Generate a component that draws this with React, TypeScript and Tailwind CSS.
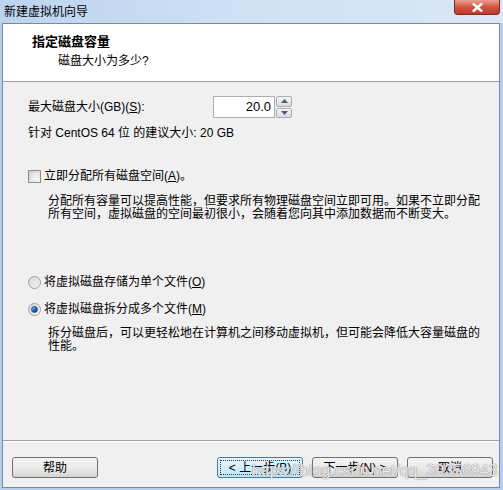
const font = "font-['Liberation_Sans','Noto_Sans_CJK_SC',sans-serif]";

function WinButton({ label, focused }: { label: string; focused?: boolean }) {
    if (focused) {
        return (
            <div className="w-[86px] h-[21px] rounded-[3px] border border-[#3c7fb1] bg-gradient-to-b from-[#eaf6fd] to-[#bee6fd] p-[2px]">
                <div className="h-full border border-dotted border-[#333] flex items-center justify-center text-[12px] text-black leading-none">
                    {label}
                </div>
            </div>
        );
    }
    return (
        <div className="w-[86px] h-[21px] rounded-[3px] border border-[#707070] bg-gradient-to-b from-[#f3f3f3] via-[#ebebeb] to-[#d6d6d6] flex items-center justify-center text-[12px] text-black leading-none">
            {label}
        </div>
    );
}

function Radio({ checked }: { checked?: boolean }) {
    return (
        <div className="w-[13px] h-[13px] rounded-full border border-[#a0a0a0] bg-gradient-to-br from-[#d4d4d4] to-[#f8f8f8] flex items-center justify-center shrink-0">
            {checked && (
                <div className="w-[7px] h-[7px] rounded-full bg-gradient-to-br from-[#8cc8f5] via-[#1f6fc4] to-[#0d3f85] border border-[#1c4f8c]" />
            )}
        </div>
    );
}

export default function App() {
    return (
        <div className={`relative w-[503px] h-[490px] bg-[#b4cfec] overflow-hidden ${font}`}>
            {/* title bar */}
            <div className="h-[23px] flex items-start justify-between bg-gradient-to-r from-[#bcd4ee] via-[#cfe1f4] to-[#dae8f6]">
                <div className="pl-[4px] pt-[5px] text-[12px] leading-[14px] text-black">新建虚拟机向导</div>
                <div className="mr-[3px] w-[46px] h-[15px] rounded-b-[4px] border border-t-0 border-[#7a2a1f] bg-gradient-to-b from-[#e8a092] via-[#d0553f] to-[#c0392a] flex items-center justify-center">
                    <svg width="11" height="9" viewBox="0 0 11 9">
                        <path d="M1 0.5 L10 8.5 M10 0.5 L1 8.5" stroke="#ffffff" strokeWidth="2.4" />
                        <path d="M1 0.5 L10 8.5 M10 0.5 L1 8.5" stroke="#ffffff" strokeWidth="1.6" />
                    </svg>
                </div>
            </div>

            {/* client */}
            <div className="ml-[2px] mr-[3px] h-[465px] border border-[#7a8a9c] bg-[#f0f0f0] flex flex-col">
                <div className="h-[58px] bg-white border-b border-[#a0a0a0] shrink-0">
                    <div className="pl-[29px] pt-[10px] text-[13px] font-bold leading-[16px] text-black">指定磁盘容量</div>
                    <div className="pl-[55px] pt-[3px] text-[12px] leading-[16px] text-black">磁盘大小为多少?</div>
                </div>

                <div className="flex flex-col pl-[25px] text-[12px] text-black">
                    <div className="mt-[14px] flex items-center h-[22px]">
                        <div className="w-[185px]">
                            最大磁盘大小(GB)(<span className="underline">S</span>):
                        </div>
                        <div className="flex h-[22px]">
                            <div className="w-[62px] h-full bg-white border border-[#abadb3] flex items-center justify-end pr-[3px] text-[13px]">
                                20.0
                            </div>
                            <div className="w-[17px] h-full flex flex-col gap-[1px] pl-[1px]">
                                <div className="flex-1 border border-[#acacac] rounded-[2px] bg-gradient-to-b from-[#f4f4f4] to-[#dcdcdc] flex items-center justify-center">
                                    <svg width="7" height="4" viewBox="0 0 7 4"><path d="M0 4 L3.5 0 L7 4 Z" fill="#4a5a80" /></svg>
                                </div>
                                <div className="flex-1 border border-[#acacac] rounded-[2px] bg-gradient-to-b from-[#f4f4f4] to-[#dcdcdc] flex items-center justify-center">
                                    <svg width="7" height="4" viewBox="0 0 7 4"><path d="M0 0 L7 0 L3.5 4 Z" fill="#4a5a80" /></svg>
                                </div>
                            </div>
                        </div>
                    </div>

                    <div className="mt-[7px] h-[16px] leading-[16px]">针对 CentOS 64 位 的建议大小: 20 GB</div>

                    <div className="mt-[27px] flex items-center gap-[3px] h-[16px]">
                        <div className="w-[13px] h-[13px] border border-[#8e8f8f] bg-gradient-to-br from-[#cbcbcb] to-[#f6f6f6] p-[2px] shrink-0">
                            <div className="w-full h-full bg-gradient-to-br from-[#e0e0e0] to-[#fafafa]" />
                        </div>
                        <span>
                            立即分配所有磁盘空间(<span className="underline">A</span>)。
                        </span>
                    </div>

                    <div className="mt-[11px] pl-[20px] leading-[13px]">
                        <div>分配所有容量可以提高性能，但要求所有物理磁盘空间立即可用。如果不立即分配</div>
                        <div>所有空间，虚拟磁盘的空间最初很小，会随着您向其中添加数据而不断变大。</div>
                    </div>

                    <div className="mt-[53px] flex items-center gap-[3px] h-[16px]">
                        <Radio />
                        <span>
                            将虚拟磁盘存储为单个文件(<span className="underline">O</span>)
                        </span>
                    </div>

                    <div className="mt-[11px] flex items-center gap-[3px] h-[16px]">
                        <Radio checked />
                        <span>
                            将虚拟磁盘拆分成多个文件(<span className="underline">M</span>)
                        </span>
                    </div>

                    <div className="mt-[10px] pl-[20px] leading-[13px]">
                        <div>拆分磁盘后，可以更轻松地在计算机之间移动虚拟机，但可能会降低大容量磁盘的</div>
                        <div>性能。</div>
                    </div>
                </div>

                <div className="mt-auto border-t border-[#a0a0a0] shadow-[inset_0_1px_0_#ffffff] h-[47px] flex items-start pt-[16px] pl-[9px] pr-[6px]">
                    <WinButton label="帮助" />
                    <div className="ml-auto flex gap-[9px]">
                        <WinButton label="< 上一步(B)" focused />
                        <WinButton label="下一步(N) >" />
                        <WinButton label="取消" />
                    </div>
                </div>
            </div>

            {/* watermark */}
            <div className="absolute left-[252px] top-[459px] text-[16px] font-['Liberation_Sans',sans-serif] text-white/80 [text-shadow:0_0_1px_#8a8a8a,0_0_1px_#8a8a8a] pointer-events-none">
                https://blog.csdn.net/qq_30356943
            </div>
        </div>
    );
}
